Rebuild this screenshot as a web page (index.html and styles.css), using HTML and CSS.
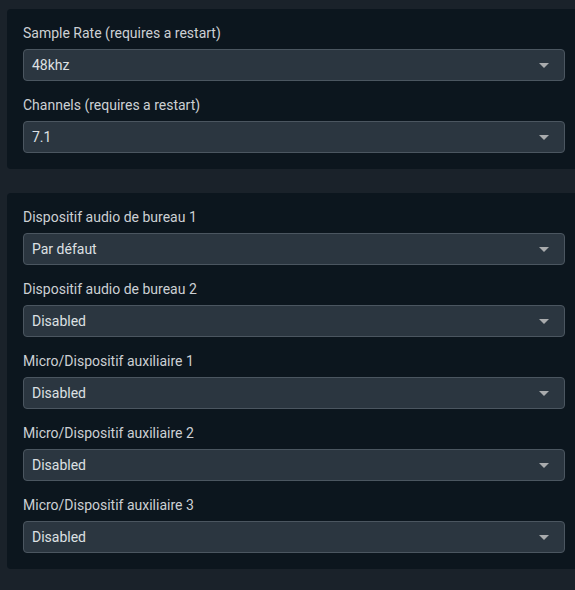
FILE: index.html
```html
<!DOCTYPE html>
<html>
<head>
<meta charset="utf-8">
<link rel="stylesheet" href="styles.css">
</head>
<body>
<div class="page">
  <section class="panel">
    <div class="field">
      <label class="label">Sample Rate (requires a restart)</label>
      <div class="select"><span>48khz</span><i class="arrow"></i></div>
    </div>
    <div class="field">
      <label class="label">Channels (requires a restart)</label>
      <div class="select"><span>7.1</span><i class="arrow"></i></div>
    </div>
  </section>
  <section class="panel">
    <div class="field">
      <label class="label">Dispositif audio de bureau 1</label>
      <div class="select"><span>Par défaut</span><i class="arrow"></i></div>
    </div>
    <div class="field">
      <label class="label">Dispositif audio de bureau 2</label>
      <div class="select"><span>Disabled</span><i class="arrow"></i></div>
    </div>
    <div class="field">
      <label class="label">Micro/Dispositif auxiliaire 1</label>
      <div class="select"><span>Disabled</span><i class="arrow"></i></div>
    </div>
    <div class="field">
      <label class="label">Micro/Dispositif auxiliaire 2</label>
      <div class="select"><span>Disabled</span><i class="arrow"></i></div>
    </div>
    <div class="field">
      <label class="label">Micro/Dispositif auxiliaire 3</label>
      <div class="select"><span>Disabled</span><i class="arrow"></i></div>
    </div>
  </section>
</div>
</body>
</html>
```
FILE: styles.css
```css
html, body {
  margin: 0;
  padding: 0;
  background: #1a222a;
  overflow: hidden;
}
body {
  font-family: Roboto, "Liberation Sans", sans-serif;
  font-size: 14px;
}
.page {
  display: flex;
  flex-direction: column;
  gap: 24px;
  padding: 9px 0 0 7px;
}
.panel {
  background: #0c161e;
  border-radius: 4px 0 0 4px;
  padding: 16px 10px 16px 16px;
  display: flex;
  flex-direction: column;
  gap: 16px;
}
.field {
  display: flex;
  flex-direction: column;
}
.label {
  color: #ccd0d4;
  line-height: 16px;
  margin-bottom: 8px;
}
.select {
  height: 32px;
  box-sizing: border-box;
  background: #2b3640;
  border: 1px solid #4b5660;
  border-radius: 4px;
  display: flex;
  align-items: center;
  justify-content: space-between;
  padding: 0 15px 0 8px;
  color: #dde0e3;
}
.arrow {
  width: 0;
  height: 0;
  border-left: 5px solid transparent;
  border-right: 5px solid transparent;
  border-top: 5px solid #a9abad;
}
```
